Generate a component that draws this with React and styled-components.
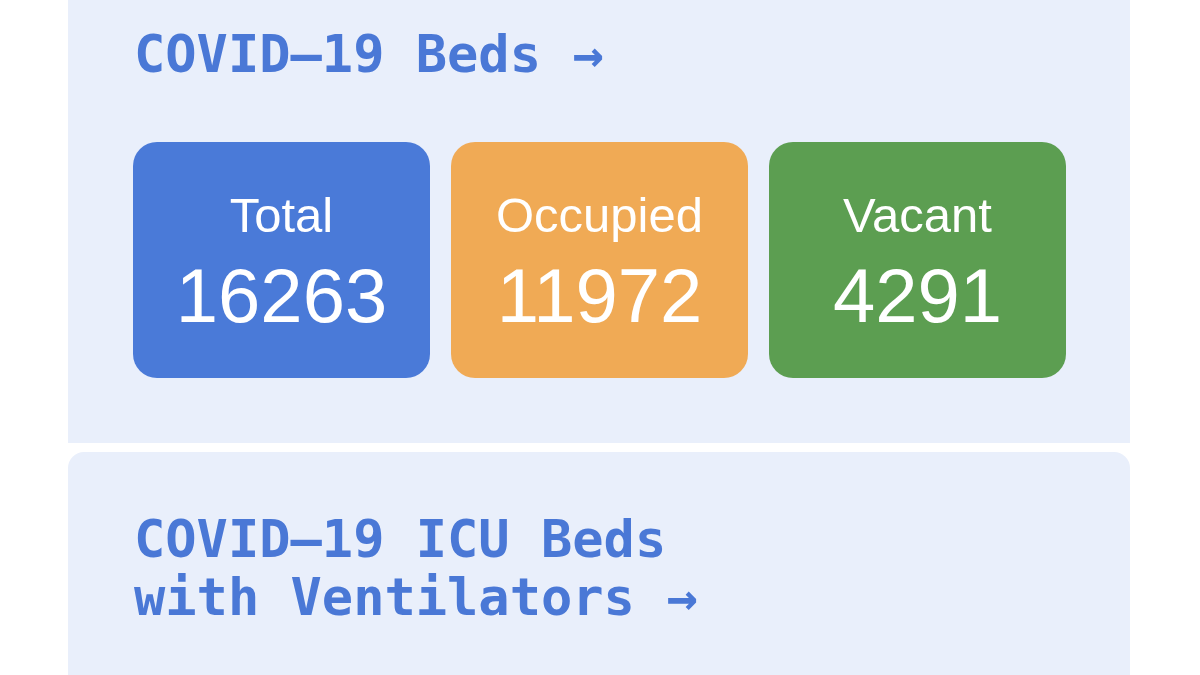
import React from "react";
import styled, { createGlobalStyle } from "styled-components";

const GlobalStyle = createGlobalStyle`
  html, body {
    margin: 0;
    padding: 0;
    background: #ffffff;
  }
  body {
    width: 1200px;
    height: 675px;
    overflow: hidden;
  }
`;

const Page = styled.div`
  width: 1062px;
  margin: 0 0 0 68px;
  display: flex;
  flex-direction: column;
  gap: 9px;
`;

const Panel = styled.section`
  background-color: #e9effb;
  padding: ${(p) => (p.$top ? "25px 64px 65px 65px" : "58px 64px 0 65px")};
  border-radius: ${(p) => (p.$top ? "0" : "16px 16px 0 0")};
  height: ${(p) => (p.$top ? "auto" : "223px")};
  box-sizing: border-box;
`;

const Heading = styled.a`
  display: block;
  font-family: "DejaVu Sans Mono", "Liberation Mono", monospace;
  font-weight: bold;
  font-size: 52px;
  line-height: 58px;
  color: #4a78d6;
  text-decoration: none;
  margin: 0 0 0 1px;
`;

const Cards = styled.div`
  display: grid;
  grid-template-columns: repeat(3, 1fr);
  gap: 21px;
  margin-top: 59px;
`;

const Card = styled.div`
  height: 236px;
  box-sizing: border-box;
  padding-top: 49px;
  border-radius: 24px;
  background-color: ${(p) => p.$color};
  color: #ffffff;
  display: flex;
  flex-direction: column;
  align-items: center;
  font-family: "Liberation Sans", Arial, sans-serif;
`;

const Label = styled.div`
  font-size: 49px;
  line-height: 48px;
`;

const Value = styled.div`
  font-size: 76px;
  line-height: 76px;
  margin-top: 19px;
`;

const stats = [
  { label: "Total", value: 16263, color: "#4a7ad8" },
  { label: "Occupied", value: 11972, color: "#f0aa55" },
  { label: "Vacant", value: 4291, color: "#5c9e51" },
];

export default function App() {
  return (
    <>
      <GlobalStyle />
      <Page>
        <Panel $top>
          <Heading href="#beds">COVID–19 Beds →</Heading>
          <Cards>
            {stats.map((s) => (
              <Card key={s.label} $color={s.color}>
                <Label>{s.label}</Label>
                <Value>{s.value}</Value>
              </Card>
            ))}
          </Cards>
        </Panel>
        <Panel>
          <Heading href="#icu">
            COVID–19 ICU Beds
            <br />
            with Ventilators →
          </Heading>
        </Panel>
      </Page>
    </>
  );
}
